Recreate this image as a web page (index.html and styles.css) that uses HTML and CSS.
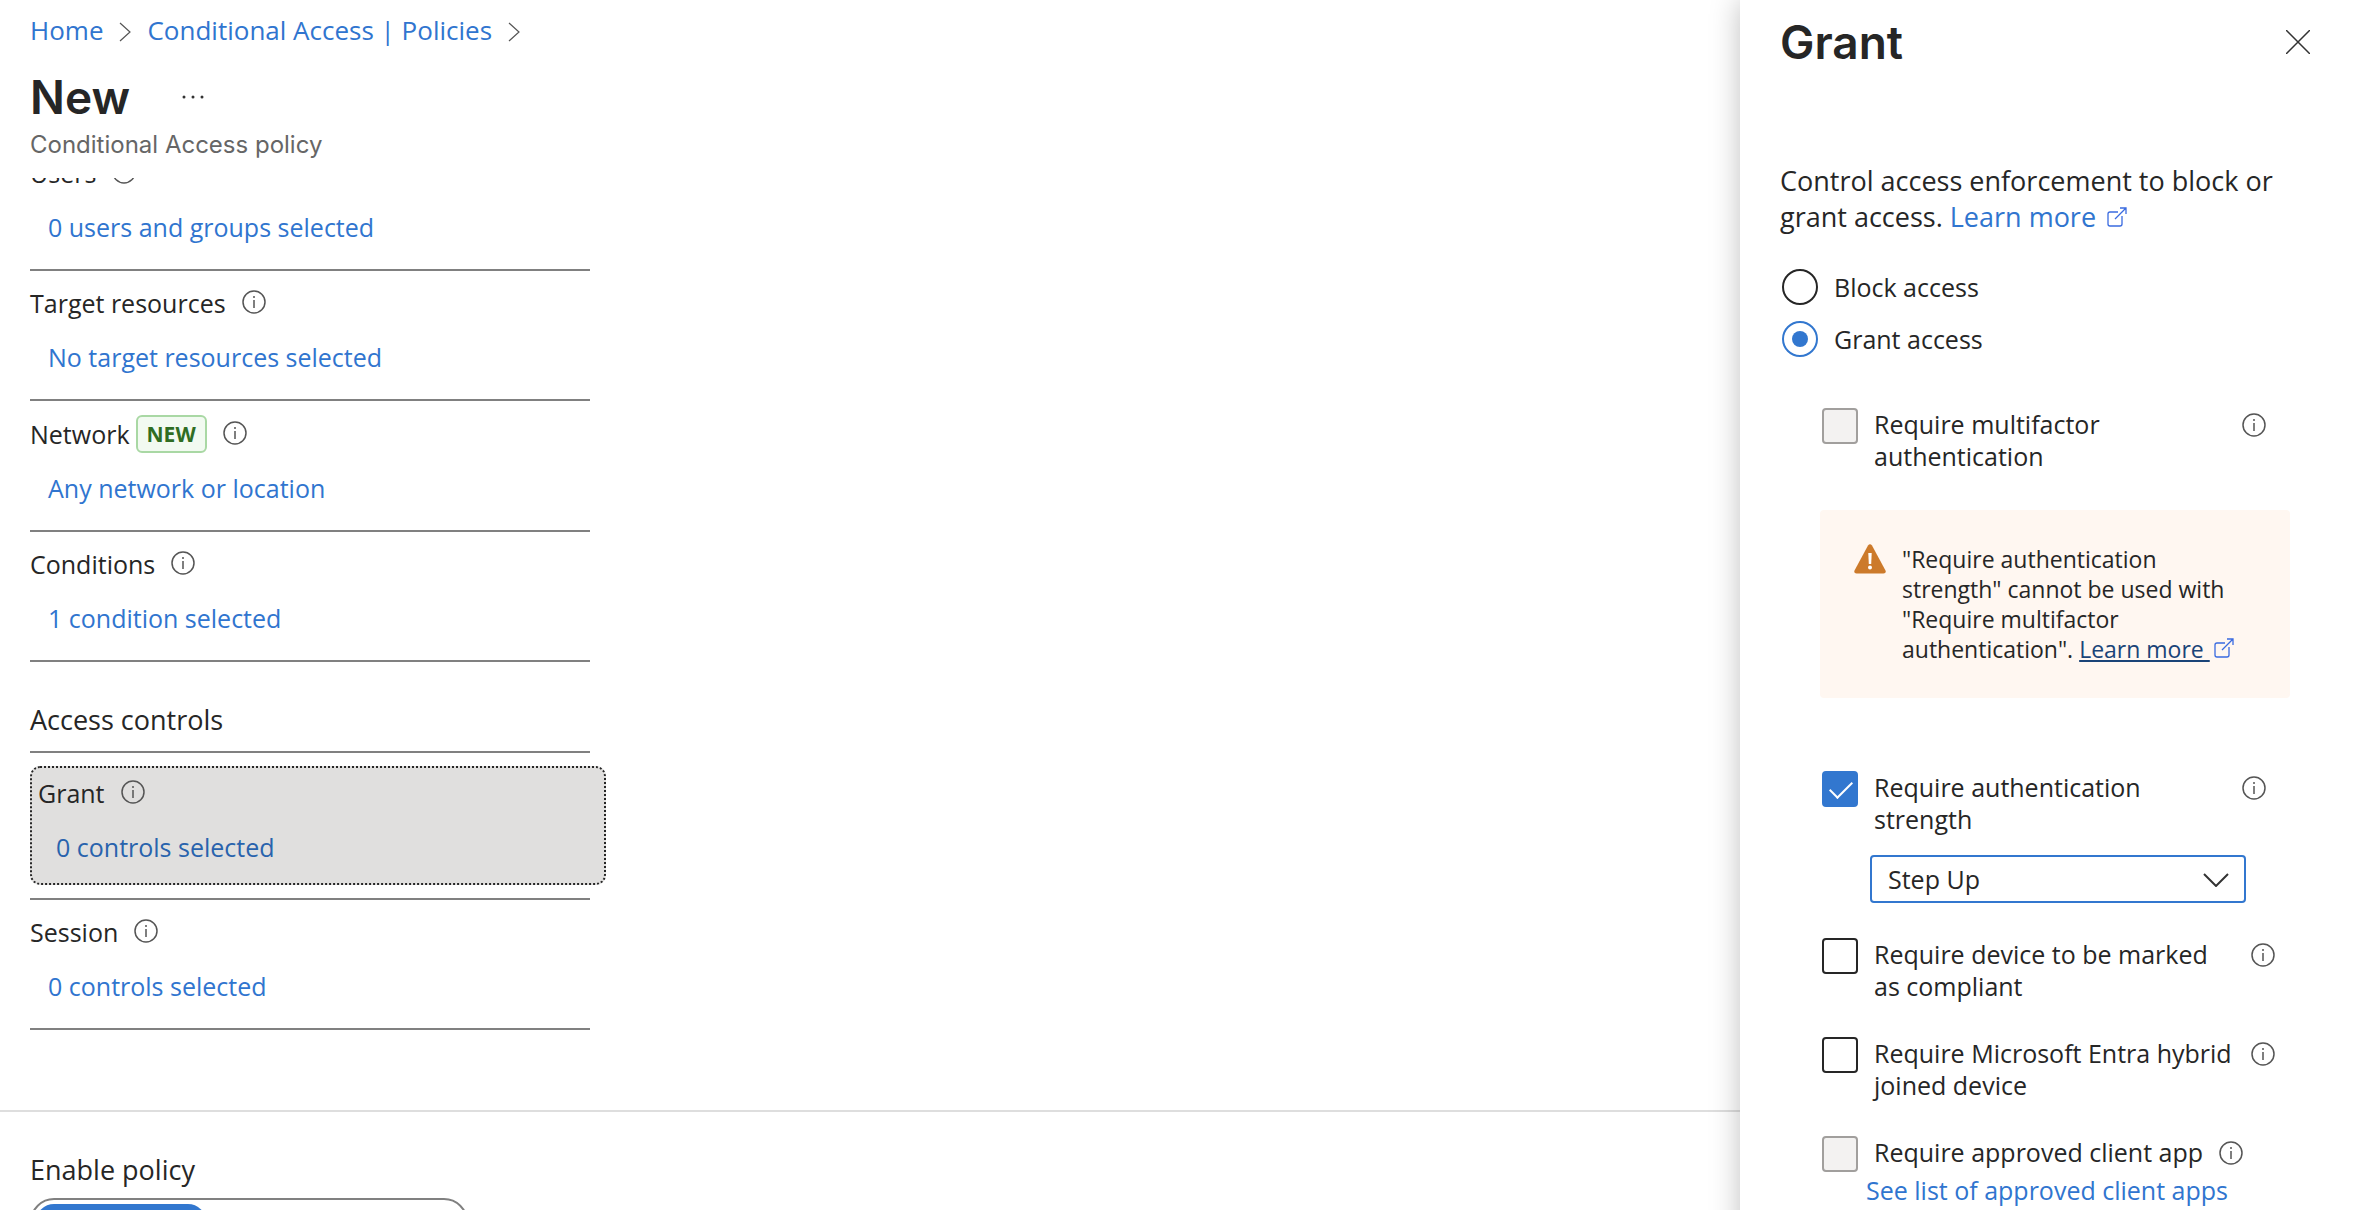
FILE: index.html
```html
<!DOCTYPE html>
<html lang="en">
  <head>
    <meta charset="utf-8" />
    <title>New - Conditional Access policy</title>
    <link rel="stylesheet" href="styles.css">
  </head>
  <body>
    <svg class="sprite" aria-hidden="true">
      <symbol id="info" viewBox="0 0 24 24">
        <circle cx="12" cy="12" r="11" fill="none" stroke="currentColor" stroke-width="1.5" />
        <path d="M12 10v8" stroke="currentColor" stroke-width="1.5" />
        <circle cx="12" cy="7" r="1" fill="currentColor" />
      </symbol>
      <symbol id="chevron" viewBox="0 0 12 20">
        <path d="M1 1l10 9-10 9" fill="none" stroke="currentColor" stroke-width="1.2" />
      </symbol>
      <symbol id="external" viewBox="0 0 20 20">
        <path d="M11 5H3a2 2 0 0 0-2 2v10a2 2 0 0 0 2 2h10a2 2 0 0 0 2-2v-8M8 12L19 1M13 1h6v6" fill="none" stroke="currentColor" stroke-width="1.3" />
      </symbol>
    </svg>

    <div class="page">
      <main class="policy">
        <header class="policy-header">
          <nav class="breadcrumb">
            <a href="#">Home</a>
            <svg class="chevron"><use href="#chevron" /></svg>
            <a href="#">Conditional Access | Policies</a>
            <svg class="chevron"><use href="#chevron" /></svg>
          </nav>
          <div class="title-row">
            <h1 class="title">New</h1>
            <button class="more" type="button" aria-label="More">
              <svg viewBox="0 0 22 4"><circle cx="2" cy="2" r="1.5" /><circle cx="11" cy="2" r="1.5" /><circle cx="20" cy="2" r="1.5" /></svg>
            </button>
          </div>
          <p class="subtitle">Conditional Access policy</p>
        </header>

        <div class="policy-scroll">
          <div class="assignments">
            <section class="item">
              <div class="item-label">Users <svg class="info"><use href="#info" /></svg></div>
              <a class="item-link" href="#">0 users and groups selected</a>
            </section>
            <section class="item">
              <div class="item-label">Target resources <svg class="info"><use href="#info" /></svg></div>
              <a class="item-link" href="#">No target resources selected</a>
            </section>
            <section class="item">
              <div class="item-label">Network <span class="badge">NEW</span> <svg class="info"><use href="#info" /></svg></div>
              <a class="item-link" href="#">Any network or location</a>
            </section>
            <section class="item">
              <div class="item-label">Conditions <svg class="info"><use href="#info" /></svg></div>
              <a class="item-link" href="#">1 condition selected</a>
            </section>

            <h2 class="group-title">Access controls</h2>
            <div class="item-holder">
              <section class="item selected">
                <div class="item-label">Grant <svg class="info"><use href="#info" /></svg></div>
                <a class="item-link" href="#">0 controls selected</a>
              </section>
            </div>
            <section class="item">
              <div class="item-label">Session <svg class="info"><use href="#info" /></svg></div>
              <a class="item-link" href="#">0 controls selected</a>
            </section>
          </div>
        </div>

        <footer class="policy-footer">
          <div class="footer-label" id="enable-label">Enable policy</div>
          <div class="toggle" role="group" aria-labelledby="enable-label">
            <button class="active" type="button">Report-only</button>
            <button type="button">On</button>
            <button type="button">Off</button>
          </div>
        </footer>
      </main>

      <aside class="panel">
        <div class="panel-header">
          <h2 class="title">Grant</h2>
          <button class="close" type="button" aria-label="Close">
            <svg viewBox="0 0 24 24"><path d="M0 0l24 24M24 0L0 24" /></svg>
          </button>
        </div>
        <p class="intro">
          Control access enforcement to block or grant access.
          <a href="#">Learn more</a>
          <svg class="external"><use href="#external" /></svg>
        </p>

        <div class="radios">
          <label class="option"><input type="radio" name="access" /><span>Block access</span></label>
          <label class="option"><input type="radio" name="access" checked /><span>Grant access</span></label>
        </div>

        <div class="controls">
          <div class="control">
            <label class="option"><input type="checkbox" disabled /><span>Require multifactor authentication</span></label>
            <svg class="info"><use href="#info" /></svg>
          </div>

          <div class="warning">
            <svg class="warning-icon" viewBox="0 0 32 30">
              <path d="M14 1.500q2-2.500 4 0l13.500 25q1 3-2 3h-27q-3 0-2-3z" fill="#cc7a2b" />
              <path d="M14.300 9h3.400l-.5 11h-2.400z" fill="#fff" />
              <circle cx="16" cy="23.500" r="2" fill="#fff" />
            </svg>
            <p class="warning-text">
              "Require authentication strength" cannot be used with "Require multifactor authentication".
              <a href="#">Learn more </a><svg class="external"><use href="#external" /></svg>
            </p>
          </div>

          <div class="control">
            <label class="option"><input type="checkbox" checked /><span>Require authentication strength</span></label>
            <svg class="info"><use href="#info" /></svg>
          </div>
          <div class="select-box">
            <select aria-label="Authentication strength">
              <option>Step Up</option>
            </select>
            <svg class="select-arrow" viewBox="0 0 26 14"><path d="M1 1l12 12L25 1" /></svg>
          </div>
          <div class="control wide">
            <label class="option"><input type="checkbox" /><span>Require device to be marked as compliant</span></label>
            <svg class="info"><use href="#info" /></svg>
          </div>
          <div class="control wide">
            <label class="option"><input type="checkbox" /><span>Require Microsoft Entra hybrid joined device</span></label>
            <svg class="info"><use href="#info" /></svg>
          </div>
          <div class="control fit">
            <label class="option"><input type="checkbox" disabled /><span>Require approved client app</span></label>
            <svg class="info"><use href="#info" /></svg>
          </div>
          <a class="apps-link" href="#">See list of approved client apps</a>
        </div>
      </aside>
    </div>
  </body>
</html>
```

FILE: styles.css
```css
* {
  box-sizing: border-box;
}

html {
  overflow: hidden;
}

body {
  margin: 0;
  background: #fff;
  color: #262626;
  font-family: "Open Sans", "Noto Sans", sans-serif;
  font-size: 25px;
  line-height: 32px;
}

h1,
h2,
p {
  margin: 0;
}

a {
  color: #3075cf;
  text-decoration: none;
}

button {
  padding: 0;
  border: none;
  background: none;
  font: inherit;
  color: inherit;
  cursor: pointer;
}

svg {
  display: block;
  flex: none;
}

.sprite {
  position: absolute;
  width: 0;
  height: 0;
}

.page {
  display: flex;
  min-height: 100vh;
}

.title {
  font-family: Inter, sans-serif;
  font-size: 46px;
  font-weight: 600;
  line-height: 60px;
}

.info {
  width: 24px;
  height: 24px;
  color: #555;
}

/* policy form */

.policy {
  flex: 1;
  min-width: 0;
}

.policy-header {
  padding: 12px 30px 15px;
}

.breadcrumb {
  display: flex;
  align-items: center;
  gap: 16px;
  font-size: 26px;
  line-height: 36px;
}

.chevron {
  width: 12px;
  height: 20px;
  margin-top: 3px;
  color: #555;
}

.title-row {
  display: flex;
  align-items: center;
  gap: 52px;
  margin-top: 19px;
}

.more svg {
  width: 22px;
  height: 4px;
  fill: #333;
}

.subtitle {
  font-family: Inter, sans-serif;
  font-size: 24px;
  line-height: 36px;
  color: #666;
}

.policy-scroll {
  overflow: hidden;
  padding: 0 30px;
}

.assignments {
  width: 560px;
  margin-top: -37px;
}

.item {
  display: flex;
  flex-direction: column;
  align-items: flex-start;
  gap: 22px;
  padding: 16px 0 26px;
  border-bottom: 2px solid #808080;
}

.item-label {
  display: flex;
  align-items: center;
}

.item-label .info {
  margin: 0 0 2px 16px;
}

.item-link {
  margin-left: 18px;
}

.badge {
  margin: -2px 0 -3px 6px;
  padding: 0 9px;
  border: 2px solid #a9d8a4;
  border-radius: 6px;
  background: #f2faf1;
  color: #2f6d22;
  font-size: 21px;
  font-weight: 700;
  line-height: 34px;
}

.group-title {
  margin-top: 40px;
  padding-bottom: 13px;
  border-bottom: 2px solid #808080;
  font-size: 27px;
  font-weight: 400;
  line-height: 36px;
}

.item-holder {
  padding: 13px 0;
  border-bottom: 2px solid #808080;
}

.item.selected {
  margin-right: -16px;
  padding: 9px 6px 20px;
  border: 2px dotted #262626;
  border-radius: 10px;
  background: #e0dfde;
}

.selected .item-link {
  color: #2963ad;
}

.policy-footer {
  margin-top: 80px;
  padding: 40px 30px 0;
  border-top: 2px solid #dedede;
}

.footer-label {
  font-size: 27px;
  line-height: 36px;
}

.toggle {
  display: inline-flex;
  margin-top: 10px;
  padding: 4px;
  border: 2px solid #808080;
  border-radius: 24px;
}

.toggle button {
  width: 128px;
  height: 36px;
  border-radius: 20px;
}

.toggle .active {
  width: 170px;
  background: #3277cf;
  color: #fff;
}

/* grant panel */

.panel {
  position: relative;
  flex: none;
  width: 616px;
  padding: 12px 40px 0;
  background: #fff;
  box-shadow: 0 0 28px rgba(0, 0, 0, 0.25);
}

.panel-header {
  display: flex;
  align-items: center;
  justify-content: space-between;
  padding-right: 6px;
}

.close svg {
  width: 24px;
  height: 24px;
  stroke: #333;
  stroke-width: 1.5;
}

.intro {
  margin-top: 91px;
  font-size: 27px;
  line-height: 36px;
}

.external {
  display: inline-block;
  width: 20px;
  height: 20px;
  margin-left: 4px;
  color: #3a6be0;
}

.radios {
  display: flex;
  flex-direction: column;
  gap: 16px;
  margin: 34px 0 0 2px;
}

.option {
  display: flex;
  gap: 16px;
}

.radios .option {
  line-height: 36px;
}

.option input {
  appearance: none;
  position: relative;
  flex: none;
  width: 36px;
  height: 36px;
  margin: 0;
  border: 2px solid #262626;
  border-radius: 4px;
}

.option input[type="radio"] {
  border-radius: 50%;
}

.option input[type="radio"]:checked {
  border-color: #3277cf;
}

.option input[type="radio"]:checked::after {
  content: "";
  position: absolute;
  inset: 8px;
  border-radius: 50%;
  background: #3277cf;
}

.option input[type="checkbox"]:checked {
  border-color: #3277cf;
  background: #3277cf;
}

.option input[type="checkbox"]:checked::after {
  content: "";
  position: absolute;
  top: 3px;
  left: 11px;
  width: 10px;
  height: 20px;
  border: solid #fff;
  border-width: 0 2px 2px 0;
  transform: rotate(45deg);
}

.option input:disabled {
  border-color: #a19f9d;
  background: #f3f2f1;
}

.controls {
  margin-top: 51px;
}

.control {
  display: flex;
  margin: 0 0 35px 42px;
}

.control .option {
  width: 402px;
}

.control.wide .option {
  width: 411px;
}

.control.fit .option {
  width: auto;
}

.control .info {
  margin: 5px 0 0 18px;
}

.control.fit {
  margin-bottom: 2px;
}

.control.fit .info {
  margin-left: 16px;
}

.warning {
  display: flex;
  gap: 16px;
  margin: 38px 26px 73px 40px;
  padding: 34px;
  border-radius: 4px;
  background: #fff7f1;
  font-size: 23px;
  line-height: 30px;
}

.warning-icon {
  width: 32px;
  height: 30px;
}

.warning-text a {
  color: #1a4478;
  text-decoration: underline;
  white-space: pre;
}

.select-box {
  position: relative;
  width: 376px;
  margin: -15px 0 35px 90px;
}

.select-box select {
  appearance: none;
  display: block;
  width: 100%;
  height: 48px;
  padding: 0 16px;
  border: 2px solid #3277cf;
  border-radius: 4px;
  background: #fff;
  color: inherit;
  font: inherit;
}

.select-arrow {
  position: absolute;
  top: 18px;
  right: 17px;
  width: 26px;
  height: 14px;
  fill: none;
  stroke: #333;
  stroke-width: 2;
  pointer-events: none;
}

.apps-link {
  margin-left: 86px;
}
```
